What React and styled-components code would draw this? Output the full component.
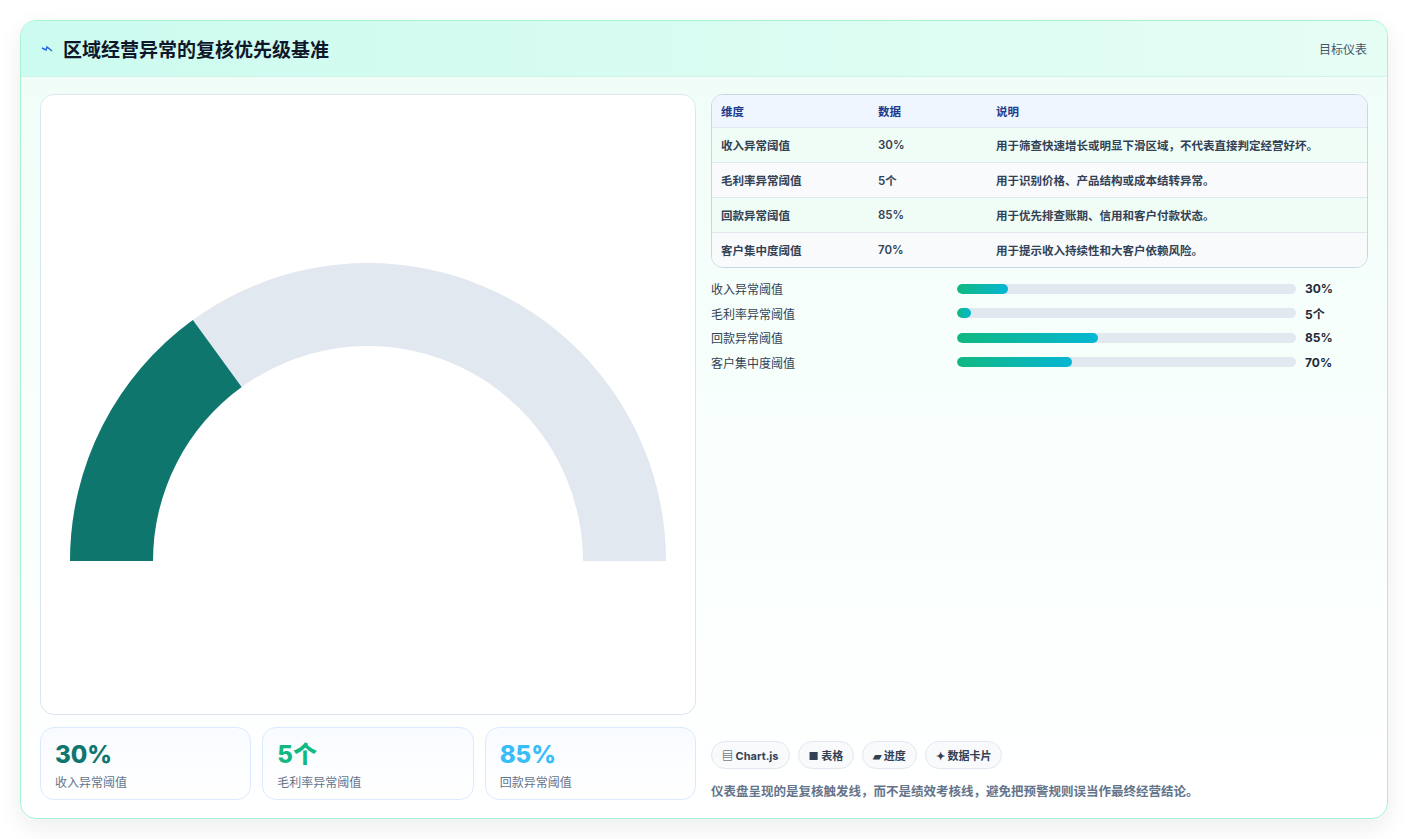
import React from 'react';
import styled, { createGlobalStyle } from 'styled-components';

const Global = createGlobalStyle`
  html, body { margin: 0; background: #ffffff; }
  body { font-family: Inter, "Noto Sans CJK SC", sans-serif; color: #1e293b; }
`;

const Page = styled.div`
  padding: 20px 20px 20px 20px;
  height: 839px;
  box-sizing: border-box;
`;

const Card = styled.div`
  height: 799px;
  box-sizing: border-box;
  border: 1px solid #a7f3d0;
  border-radius: 16px;
  background: linear-gradient(180deg, #effdf7 0%, #f8fffc 50%, #ffffff 100%);
  box-shadow: 0 8px 24px rgba(15, 23, 42, 0.08);
  display: flex;
  flex-direction: column;
  overflow: hidden;
`;

const Header = styled.div`
  height: 55px;
  flex-shrink: 0;
  display: flex;
  align-items: center;
  justify-content: space-between;
  padding: 0 20px;
  background: linear-gradient(90deg, #ccfbef 0%, #e6fdf4 100%);
  border-bottom: 1px solid #d1f5e8;
`;

const Title = styled.h1`
  margin: 0;
  font-size: 19px;
  font-weight: 700;
  color: #0f172a;
  display: flex;
  align-items: center;
  gap: 10px;
`;

const Meta = styled.span`
  font-size: 12px;
  color: #475569;
`;

const Body = styled.div`
  flex: 1;
  display: grid;
  grid-template-columns: 656px 657px;
  gap: 15px;
  padding: 17px 19px 18px 19px;
  min-height: 0;
`;

const Left = styled.div`
  display: flex;
  flex-direction: column;
  gap: 12px;
`;

const ChartPanel = styled.div`
  flex: 1;
  background: #fff;
  border: 1px solid #dbe7f0;
  border-radius: 14px;
  display: flex;
  justify-content: center;
  align-items: flex-start;
  padding-top: 168px;
`;

const Stats = styled.div`
  display: grid;
  grid-template-columns: repeat(3, 1fr);
  gap: 11px;
`;

const Stat = styled.div`
  height: 73px;
  box-sizing: border-box;
  border: 1px solid #dbeafe;
  border-radius: 14px;
  background: linear-gradient(180deg, #f8fbff, #ffffff);
  padding: 12px 14px;
`;

const StatValue = styled.div`
  font-size: 24px;
  font-weight: 800;
  color: ${p => p.color};
  line-height: 30px;
`;

const StatLabel = styled.div`
  font-size: 12px;
  color: #64748b;
  margin-top: 3px;
`;

const Right = styled.div`
  display: flex;
  flex-direction: column;
`;

const Table = styled.div`
  border: 1px solid #cbd5e1;
  border-radius: 12px;
  overflow: hidden;
  background: #fff;
`;

const Row = styled.div`
  display: grid;
  grid-template-columns: 157px 118px 1fr;
  padding: 0 9px;
  height: ${p => (p.head ? 32 : 34)}px;
  align-items: center;
  font-size: 11.5px;
  font-weight: 600;
  color: ${p => (p.head ? '#1e3a8a' : '#334155')};
  background: ${p => (p.head ? '#eff6ff' : p.alt ? '#f8fafc' : '#f0fdf7')};
  border-top: ${p => (p.head ? 'none' : '1px solid #e2e8f0')};
`;

const Bars = styled.div`
  display: flex;
  flex-direction: column;
  gap: 8.5px;
  margin-top: 12px;
`;

const BarRow = styled.div`
  display: grid;
  grid-template-columns: 246px 339px 1fr;
  gap: 0;
  align-items: center;
  font-size: 12px;
  height: 16px;
  color: #334155;
`;

const Track = styled.div`
  height: 10px;
  border-radius: 5px;
  background: #e2e8f0;
  overflow: hidden;
`;

const Fill = styled.div`
  height: 100%;
  border-radius: 5px;
  background: linear-gradient(90deg, #10b981, #06b6d4);
`;

const BarValue = styled.span`
  font-weight: 700;
  color: #1e293b;
  padding-left: 9px;
`;

const Footer = styled.div`
  margin-top: auto;
`;

const Chips = styled.div`
  display: flex;
  gap: 8px;
`;

const Chip = styled.span`
  height: 28px;
  box-sizing: border-box;
  padding: 0 10px;
  border: 1px solid #e2e8f0;
  border-radius: 14px;
  background: #f8fafc;
  font-size: 11px;
  font-weight: 700;
  color: #334155;
  display: inline-flex;
  align-items: center;
  gap: 4px;
`;

const Note = styled.p`
  margin: 12px 0 0;
  font-size: 12.5px;
  font-weight: 600;
  color: #64748b;
`;

const rows = [
  ['收入异常阈值', '30%', '用于筛查快速增长或明显下滑区域，不代表直接判定经营好坏。'],
  ['毛利率异常阈值', '5个', '用于识别价格、产品结构或成本结转异常。'],
  ['回款异常阈值', '85%', '用于优先排查账期、信用和客户付款状态。'],
  ['客户集中度阈值', '70%', '用于提示收入持续性和大客户依赖风险。'],
];

const bars = [
  ['收入异常阈值', 15, '30%'],
  ['毛利率异常阈值', 4, '5个'],
  ['回款异常阈值', 41.5, '85%'],
  ['客户集中度阈值', 34, '70%'],
];

function Gauge() {
  const cx = 298, cy = 298, R = 298, r = 215;
  const a = (54 * Math.PI) / 180;
  const ang = Math.PI - a;
  const ox = cx + R * Math.cos(ang), oy = cy - R * Math.sin(ang);
  const ix = cx + r * Math.cos(ang), iy = cy - r * Math.sin(ang);
  return (
    <svg width="596" height="300" viewBox="0 0 596 300">
      <path d={`M0 298 A${R} ${R} 0 0 1 596 298 L${cx + r} 298 A${r} ${r} 0 0 0 ${cx - r} 298 Z`} fill="#e2e8f0" />
      <path d={`M0 298 A${R} ${R} 0 0 1 ${ox} ${oy} L${ix} ${iy} A${r} ${r} 0 0 0 ${cx - r} 298 Z`} fill="#0f766e" />
    </svg>
  );
}

export default function App() {
  return (
    <Page>
      <Global />
      <Card>
        <Header>
          <Title>
            <svg width="12" height="8" viewBox="0 0 12 8"><path d="M1 3 L5 5 L6 2 L11 6" stroke="#2563eb" strokeWidth="1.4" fill="none" /></svg>
            区域经营异常的复核优先级基准
          </Title>
          <Meta>目标仪表</Meta>
        </Header>
        <Body>
          <Left>
            <ChartPanel><Gauge /></ChartPanel>
            <Stats>
              <Stat><StatValue color="#0f766e">30%</StatValue><StatLabel>收入异常阈值</StatLabel></Stat>
              <Stat><StatValue color="#10b981">5个</StatValue><StatLabel>毛利率异常阈值</StatLabel></Stat>
              <Stat><StatValue color="#38bdf8">85%</StatValue><StatLabel>回款异常阈值</StatLabel></Stat>
            </Stats>
          </Left>
          <Right>
            <Table>
              <Row head><span>维度</span><span>数据</span><span>说明</span></Row>
              {rows.map((r, i) => (
                <Row key={r[0]} alt={i % 2 === 1}><span>{r[0]}</span><span>{r[1]}</span><span>{r[2]}</span></Row>
              ))}
            </Table>
            <Bars>
              {bars.map(b => (
                <BarRow key={b[0]}>
                  <span>{b[0]}</span>
                  <Track><Fill style={{ width: `${b[1]}%` }} /></Track>
                  <BarValue>{b[2]}</BarValue>
                </BarRow>
              ))}
            </Bars>
            <Footer>
              <Chips>
                <Chip>▤ Chart.js</Chip>
                <Chip>■ 表格</Chip>
                <Chip>▰ 进度</Chip>
                <Chip>✦ 数据卡片</Chip>
              </Chips>
              <Note>仪表盘呈现的是复核触发线，而不是绩效考核线，避免把预警规则误当作最终经营结论。</Note>
            </Footer>
          </Right>
        </Body>
      </Card>
    </Page>
  );
}
